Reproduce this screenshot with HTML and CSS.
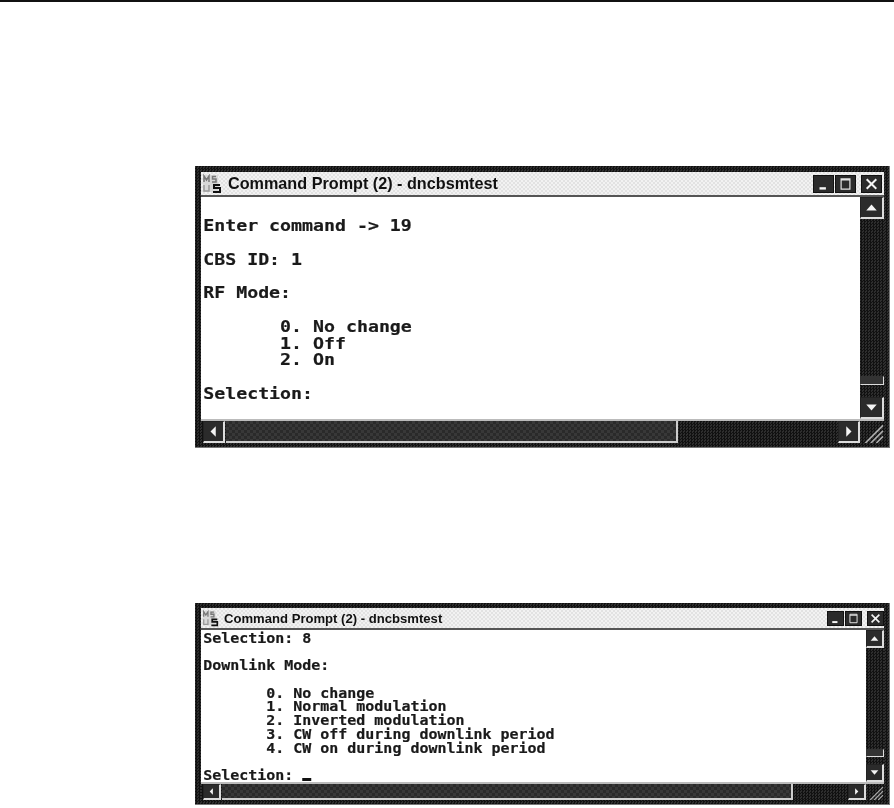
FILE: index.html
```html
<!DOCTYPE html>
<html lang="en">
<head>
<meta charset="utf-8">
<title>Command Prompt windows</title>
<link rel="stylesheet" href="styles.css">
</head>
<body>
<div class="rule"></div>
<main class="page">
  <section class="window large">
    <header class="titlebar">
      <svg class="appicon" viewBox="0 0 20 20" aria-hidden="true">
        <rect x="1" y="1" width="15" height="17" fill="#d8d8d8"/>
        <path d="M2 8V2l2.500 4L7 2v6M14 2.500H10.500V5H14V8H10" fill="none" stroke="#777" stroke-width="1.500"/>
        <path d="M2 11v6h5v-6" fill="none" stroke="#999" stroke-width="1.500"/>
        <path d="M18 11h-6v3h6v4h-7" fill="none" stroke="#111" stroke-width="2"/>
      </svg>
      <span class="titletext">Command Prompt (2) - dncbsmtest</span>
      <div class="controls">
        <span class="ctl"><svg viewBox="0 0 20 20"><rect x="5" y="14" width="8" height="3" fill="#f4f4f4"/></svg></span>
        <span class="ctl"><svg viewBox="0 0 20 20"><path d="M4.500 3.500h11v13h-11zM4.500 5h11" fill="none" stroke="#e4e4e4" stroke-width="1.500"/></svg></span>
        <span class="ctl gap"><svg viewBox="0 0 20 20"><path d="M4 4l12 12M16 4L4 16" stroke="#f4f4f4" stroke-width="2.500"/></svg></span>
      </div>
    </header>
    <div class="client">
      <pre class="console">
Enter command -&gt; 19

CBS ID: 1

RF Mode:

       0. No change
       1. Off
       2. On

Selection:</pre>
      <div class="vscroll">
        <span class="btn"><svg viewBox="0 0 20 20"><path d="M3 14L10 6l7 8z" fill="#f4f4f4"/></svg></span>
        <div class="track"><span class="vthumb"></span></div>
        <span class="btn"><svg viewBox="0 0 20 20"><path d="M3 6l7 8 7-8z" fill="#f4f4f4"/></svg></span>
      </div>
    </div>
    <div class="hrow">
      <div class="hscroll">
        <span class="btn"><svg viewBox="0 0 20 20"><path d="M13 3l-7 7 7 7z" fill="#f4f4f4"/></svg></span>
        <span class="hthumb"></span>
        <span class="htrack"></span>
        <span class="btn"><svg viewBox="0 0 20 20"><path d="M7 3l7 7-7 7z" fill="#f4f4f4"/></svg></span>
      </div>
      <span class="grip"><svg viewBox="0 0 20 20"><path d="M4 20L20 4M9 20L20 9M14 20l6-6" stroke="#aaa" stroke-width="1.500"/></svg></span>
    </div>
  </section>

  <section class="window small">
    <header class="titlebar">
      <svg class="appicon" viewBox="0 0 20 20" aria-hidden="true">
        <rect x="1" y="1" width="15" height="17" fill="#d8d8d8"/>
        <path d="M2 8V2l2.500 4L7 2v6M14 2.500H10.500V5H14V8H10" fill="none" stroke="#777" stroke-width="1.500"/>
        <path d="M2 11v6h5v-6" fill="none" stroke="#999" stroke-width="1.500"/>
        <path d="M18 11h-6v3h6v4h-7" fill="none" stroke="#111" stroke-width="2"/>
      </svg>
      <span class="titletext">Command Prompt (2) - dncbsmtest</span>
      <div class="controls">
        <span class="ctl"><svg viewBox="0 0 20 20"><rect x="5" y="14" width="8" height="3" fill="#f4f4f4"/></svg></span>
        <span class="ctl"><svg viewBox="0 0 20 20"><path d="M4.500 3.500h11v13h-11zM4.500 5h11" fill="none" stroke="#e4e4e4" stroke-width="1.500"/></svg></span>
        <span class="ctl gap"><svg viewBox="0 0 20 20"><path d="M4 4l12 12M16 4L4 16" stroke="#f4f4f4" stroke-width="2.500"/></svg></span>
      </div>
    </header>
    <div class="client">
      <pre class="console">Selection: 8

Downlink Mode:

       0. No change
       1. Normal modulation
       2. Inverted modulation
       3. CW off during downlink period
       4. CW on during downlink period

Selection: <span class="cursor"></span></pre>
      <div class="vscroll">
        <span class="btn"><svg viewBox="0 0 20 20"><path d="M3 14L10 6l7 8z" fill="#f4f4f4"/></svg></span>
        <div class="track"><span class="vthumb"></span></div>
        <span class="btn"><svg viewBox="0 0 20 20"><path d="M3 6l7 8 7-8z" fill="#f4f4f4"/></svg></span>
      </div>
    </div>
    <div class="hrow">
      <div class="hscroll">
        <span class="btn"><svg viewBox="0 0 20 20"><path d="M13 3l-7 7 7 7z" fill="#f4f4f4"/></svg></span>
        <span class="hthumb"></span>
        <span class="htrack"></span>
        <span class="btn"><svg viewBox="0 0 20 20"><path d="M7 3l7 7-7 7z" fill="#f4f4f4"/></svg></span>
      </div>
      <span class="grip"><svg viewBox="0 0 20 20"><path d="M4 20L20 4M9 20L20 9M14 20l6-6" stroke="#aaa" stroke-width="1.500"/></svg></span>
    </div>
  </section>
</main>
</body>
</html>
```
FILE: styles.css
```css
* { box-sizing: border-box; }
html, body { margin: 0; background: #fff; }
body { width: 894px; height: 808px; overflow: hidden; }
svg { display: block; width: 100%; height: 100%; }

.rule { height: 2px; background: #111; }

.page {
  display: flex;
  flex-direction: column;
  padding: 164px 0 0 195px;
  gap: 155px;
}

.window {
  --dither: repeating-conic-gradient(#111 0 25%, #2e2e2e 0 50%) 0 0 / 3px 3px;
  width: 695px;
  background: var(--dither);
  border: 1px solid #777;
  border-width: 0 1px 1px 0;
  display: flex;
  flex-direction: column;
  filter: blur(0.35px);
}
.large { height: 282px; padding: 6px 5px 4px 6px; --bar: 25px; --sb: 24px; --btn: 22px; --thumb: 452px; --ctl: 21px; --title: 16.200px; --vth: 9px; --vpad: 10px; --tgap: 6px; --ctlr: 2px; }
.small { height: 202px; padding: 5px 5px 4px 6px; --bar: 22px; --sb: 18px; --btn: 18px; --thumb: 571px; --ctl: 17px; --title: 13.100px; --vth: 8px; --vpad: 5px; --tgap: 5px; --ctlr: 0px; }

.titlebar {
  flex: none;
  height: var(--bar);
  display: flex;
  align-items: center;
  gap: var(--tgap);
  padding: 0 var(--ctlr) 0 1px;
  background: repeating-conic-gradient(#e2e2e2 0 25%, #f2f2f2 0 50%) 0 0 / 4px 4px;
  border-bottom: 2px solid #555;
}
.appicon { flex: none; width: calc(var(--bar) - 5px); height: calc(var(--bar) - 5px); }
.titletext {
  font: bold var(--title) "Liberation Sans", Arial, sans-serif;
  color: #111;
  white-space: nowrap;
  flex: 1;
}
.controls { display: flex; gap: 1px; }
.ctl {
  width: var(--ctl);
  height: calc(var(--bar) - 7px);
  background: #2b2b2b;
  border: 1px solid #111;
}
.ctl.gap { margin-left: 4px; }

.client { flex: 1; min-height: 0; display: flex; justify-content: space-between; background: #fff; }
.console {
  flex: none;
  width: 80%;
  margin: 0;
  overflow: hidden;
  font-weight: bold;
  font-family: "DejaVu Sans Mono", "Liberation Mono", monospace;
  color: #1a1a1a;
  transform-origin: 0 0;
  -webkit-text-stroke: 0.2px #1a1a1a;
}
.large .console {
  font-size: 16.300px;
  transform: scaleX(1.120);
  line-height: 16.800px;
  padding: 21px 0 0 2px;
}
.small .console {
  font-size: 13.300px;
  transform: scaleX(1.125);
  line-height: 13.800px;
  padding: 1.500px 0 0 2px;
}
.cursor {
  display: inline-block;
  width: 8px;
  height: 3px;
  background: #111;
  vertical-align: -1px;
}

.vscroll {
  flex: none;
  width: var(--sb);
  display: flex;
  flex-direction: column;
  background: var(--dither);
}
.track { flex: 1; display: flex; flex-direction: column; justify-content: flex-end; padding-bottom: var(--vpad); margin-bottom: 2px; }
.vthumb {
  display: block;
  height: var(--vth);
  background: #333;
  border: 1px solid #333;
  border-right-color: #ddd;
  border-bottom-color: #ddd;
}
.btn {
  flex: none;
  display: block;
  width: var(--sb);
  height: var(--btn);
  background: #2b2b2b;
  border: 1px solid #222;
  border-right: 2px solid #ddd;
  border-bottom: 2px solid #ddd;
  padding: 2px;
}

.hrow { flex: none; height: var(--sb); display: flex; border-top: 2px solid #bbb; }
.hscroll { flex: 1; display: flex; background: var(--dither); padding-left: 2px; }
.hthumb {
  flex: none;
  width: var(--thumb);
  margin-left: 1px;
  background: repeating-conic-gradient(#2a2a2a 0 25%, #383838 0 50%) 0 0 / 6px 6px;
  border-right: 2px solid #ccc;
  border-bottom: 2px solid #ccc;
}
.htrack { flex: 1; }
.hscroll .btn { width: var(--btn); height: 100%; }
.grip { flex: none; width: var(--sb); height: 100%; overflow: hidden; }
```
